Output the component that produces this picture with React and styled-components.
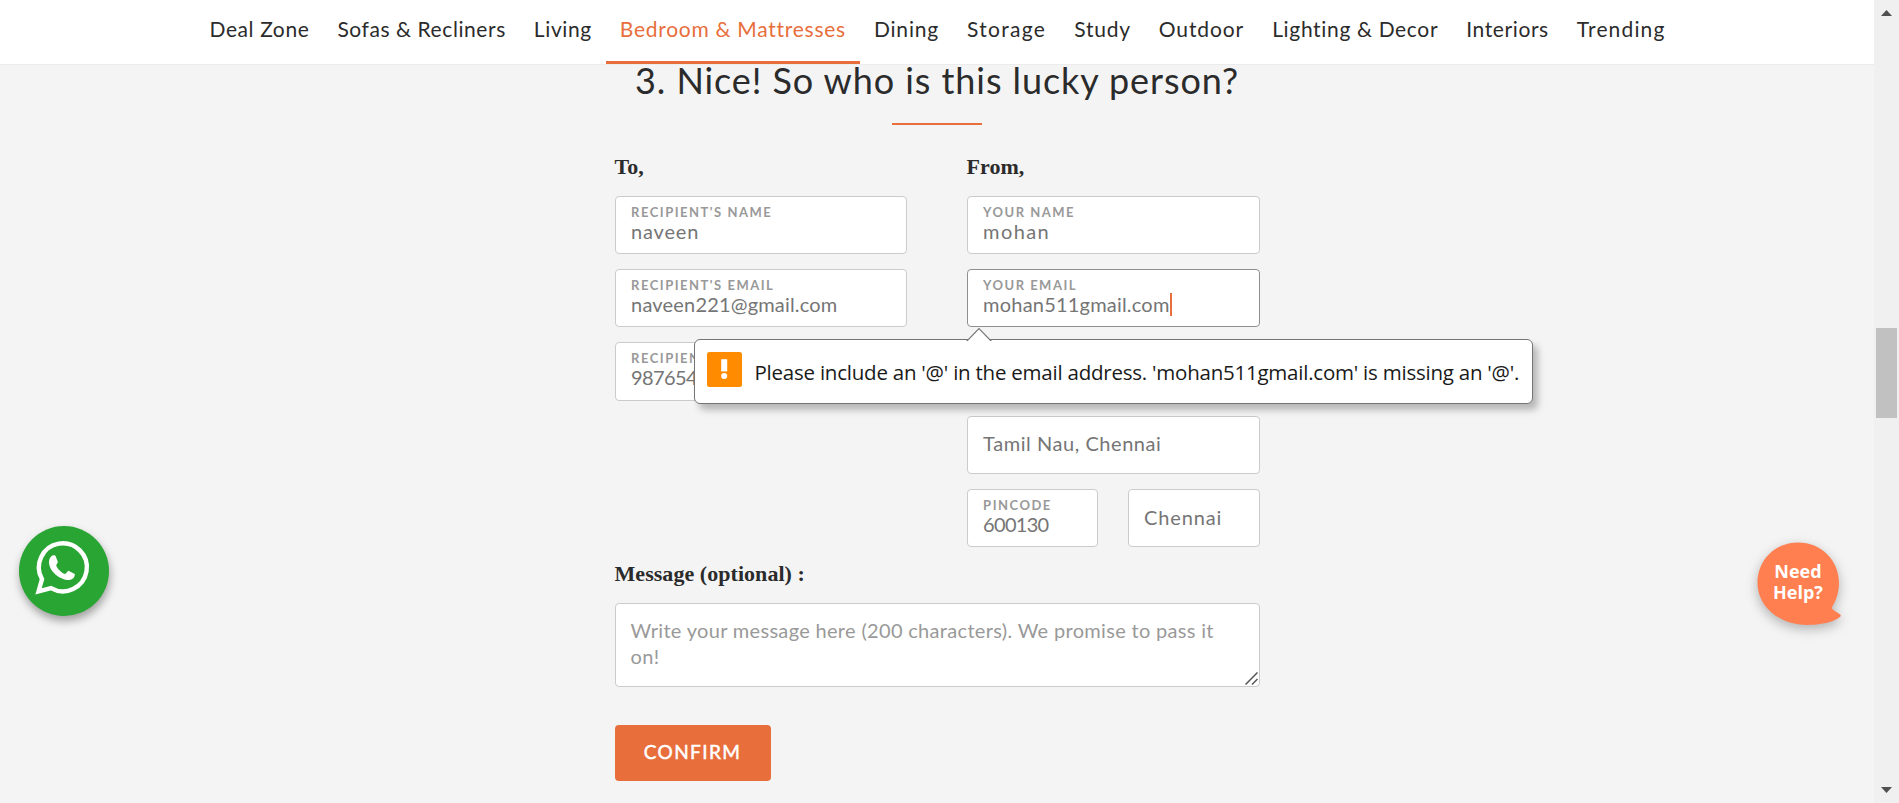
import React from "react";
import styled, { createGlobalStyle, css } from "styled-components";

const accent = "#e86e3c";
const surface = "#f4f4f4";

const GlobalStyle = createGlobalStyle`
  * { box-sizing: border-box; }
  html, body { margin: 0; height: 100%; overflow: hidden; }
  body { background: ${surface}; color: #2b2b2b; font-family: Lato, "Open Sans", sans-serif; }
`;

const Window = styled.div`
  display: grid;
  grid-template-columns: 1fr 25px;
  height: 803px;
  overflow: hidden;
`;

const Page = styled.div`
  min-width: 0;
  background: ${surface};
`;

const Nav = styled.nav`
  display: flex;
  justify-content: center;
  height: 65px;
  padding-left: 1px;
  background: #fff;
  border-bottom: 1px solid #ececec;
`;

const NavItem = styled.a`
  height: 64px;
  padding: 0 14px;
  font-size: 21px;
  line-height: 57px;
  white-space: nowrap;
  letter-spacing: ${(p) => p.$spacing}px;
  color: ${(p) => (p.$active ? accent : "#2b2b2b")};
  border-bottom: 3px solid ${(p) => (p.$active ? accent : "transparent")};
`;

const Form = styled.form`
  display: flex;
  flex-direction: column;
  width: 645px;
  margin: 0 auto;
`;

const Title = styled.h2`
  margin: 0 -20px;
  text-align: center;
  font-size: 36px;
  font-weight: 400;
  line-height: 30px;
  letter-spacing: 0.92px;
  white-space: nowrap;
`;

const Divider = styled.hr`
  width: 90px;
  height: 2px;
  margin: 28px auto 0;
  border: 0;
  background: ${accent};
`;

const Columns = styled.div`
  display: grid;
  grid-template-columns: 292px 293px;
  column-gap: 60px;
  margin-top: 29px;
`;

const Column = styled.div`
  display: flex;
  flex-direction: column;
  gap: 15px;
`;

const GroupLabel = styled.div`
  margin-bottom: 0.8px;
  font: 700 22px/26px "Liberation Serif", serif;
  letter-spacing: 0.05px;
  white-space: nowrap;
`;

const Field = styled.div`
  position: relative;
  height: 58.3px;
  padding: 8px 15px 0 15.6px;
  background: #fff;
  border: 1px solid ${(p) => (p.$focused ? "#8f8f8f" : "#cbcbcb")};
  border-radius: 4px;
`;

const FieldLabel = styled.div`
  overflow: hidden;
  font-size: 13px;
  font-weight: 700;
  line-height: 14px;
  letter-spacing: 1.5px;
  white-space: nowrap;
  color: #999;
`;

const Value = styled.div`
  display: flex;
  align-items: center;
  font-size: 20px;
  line-height: 24px;
  letter-spacing: ${(p) => p.$spacing || 0}px;
  white-space: nowrap;
  color: #757575;
  ${(p) => p.$alone && css`margin-top: 6.8px;`}
`;

const Caret = styled.span`
  width: 2px;
  height: 23px;
  background: ${accent};
`;

const Split = styled.div`
  display: grid;
  grid-template-columns: 131px 132px;
  column-gap: 30px;
`;

const MessageLabel = styled(GroupLabel)`
  margin-top: 13.6px;
`;

const MessageBox = styled.div`
  position: relative;
  height: 84px;
  margin-top: 15.4px;
  padding: 13px 15px;
  background: #fff;
  border: 1px solid #cbcbcb;
  border-radius: 4px;
  color: #999;
  font-size: 20px;
  line-height: 26px;
  letter-spacing: 0.32px;
`;

const ResizeHandle = styled.svg`
  position: absolute;
  right: 1px;
  bottom: 1px;
  width: 13px;
  height: 13px;
`;

const Confirm = styled.button`
  align-self: flex-start;
  width: 156px;
  height: 56px;
  margin-top: 38px;
  padding: 0;
  border: 0;
  border-radius: 4px;
  background: ${accent};
  color: #fff;
  font: 400 19px/54px Lato, sans-serif;
  letter-spacing: 1.4px;
  -webkit-text-stroke: 0.5px #fff;
  span { position: relative; top: -1px; }
`;

const Tooltip = styled.div`
  position: absolute;
  z-index: 5;
  top: 69px;
  left: -274px;
  display: flex;
  align-items: center;
  gap: 13px;
  width: 839px;
  height: 65px;
  padding-left: 12px;
  background: #fff;
  border: 1px solid #757575;
  border-radius: 6px;
  box-shadow: 5px 6px 7px rgba(0, 0, 0, 0.25);
`;

const TooltipArrow = styled.svg`
  position: absolute;
  top: -13px;
  left: 271px;
  width: 26px;
  height: 14px;
`;

const WarnIcon = styled.svg`
  flex: none;
  width: 35px;
  height: 35px;
  margin-top: -5px;
`;

const TooltipText = styled.span`
  font: 400 20.5px/28px "Open Sans", sans-serif;
  letter-spacing: -0.23px;
  white-space: nowrap;
  color: #1a1a1a;
`;

const WhatsAppButton = styled.div`
  position: absolute;
  left: 19px;
  top: 526px;
  width: 90px;
  height: 90px;
  border-radius: 50%;
  background: #28a532;
  box-shadow: 1px 5px 8px rgba(0, 0, 0, 0.35);
  svg { display: block; width: 90px; height: 90px; }
`;

const HelpButton = styled.div`
  position: absolute;
  left: 1757px;
  top: 542px;
  width: 85px;
  height: 84px;
  padding: 19px 3px 0 0;
  text-align: center;
  color: #fff;
  font: 700 18px/21px "Open Sans", sans-serif;
`;

const HelpShape = styled.svg`
  position: absolute;
  inset: 0;
  width: 85px;
  height: 84px;
  overflow: visible;
  filter: drop-shadow(0 4px 6px rgba(0, 0, 0, 0.28));
`;

const HelpText = styled.span`
  position: relative;
  display: block;
`;

const Scrollbar = styled.div`
  display: flex;
  flex-direction: column;
  align-items: center;
  justify-content: space-between;
  padding: 10px 2px;
  background: #f0f0f0;
`;

const ScrollArrow = styled.svg`
  width: 11px;
  height: 6px;
`;

const Track = styled.div`
  width: 21px;
  height: 771px;
  padding-top: 312px;
`;

const Thumb = styled.div`
  height: 90px;
  background: #c1c1c1;
`;

const navItems = [
  ["Deal Zone", 0.6],
  ["Sofas & Recliners", 0.58],
  ["Living", 0.6],
  ["Bedroom & Mattresses", 0.73],
  ["Dining", 0.83],
  ["Storage", 1.3],
  ["Study", 0.75],
  ["Outdoor", 0.9],
  ["Lighting & Decor", 0.66],
  ["Interiors", 0.6],
  ["Trending", 1.15],
];

function TextField({ label, value, spacing, focused, children }) {
  return (
    <Field $focused={focused}>
      {label && <FieldLabel>{label}</FieldLabel>}
      <Value $spacing={spacing} $alone={!label}>
        {value}
        {focused && <Caret />}
      </Value>
      {children}
    </Field>
  );
}

function ValidationTooltip() {
  return (
    <Tooltip>
      <TooltipArrow viewBox="0 0 26 14">
        <path d="M1 13.5 L13 1.5 L25 13.5 V14 H1 Z" fill="#fff" />
        <path d="M0.5 13.5 H1.5 L13 1.5 L24.5 13.5 H25.5" fill="none" stroke="#757575" strokeWidth="1.1" />
      </TooltipArrow>
      <WarnIcon viewBox="0 0 35 35">
        <rect width="35" height="35" rx="2.5" fill="#ff8c00" />
        <rect x="14.2" y="7.2" width="6" height="12.2" fill="#fff" />
        <circle cx="17.2" cy="24" r="3" fill="#fff" />
      </WarnIcon>
      <TooltipText>
        Please include an '@' in the email address. 'mohan511gmail.com' is missing an '@'.
      </TooltipText>
    </Tooltip>
  );
}

export default function App() {
  return (
    <>
      <GlobalStyle />
      <Window>
        <Page>
          <Nav>
            {navItems.map(([name, spacing]) => (
              <NavItem key={name} $spacing={spacing} $active={name.startsWith("Bedroom")}>
                {name}
              </NavItem>
            ))}
          </Nav>
          <Form>
            <Title>3. Nice! So who is this lucky person?</Title>
            <Divider />
            <Columns>
              <Column>
                <GroupLabel>To,</GroupLabel>
                <TextField label="RECIPIENT'S NAME" value="naveen" spacing={0.8} />
                <TextField label="RECIPIENT'S EMAIL" value="naveen221@gmail.com" spacing={0.18} />
                <TextField label="RECIPIENT'S" value="987654" spacing={-0.6} />
              </Column>
              <Column>
                <GroupLabel>From,</GroupLabel>
                <TextField label="YOUR NAME" value="mohan" spacing={1.4} />
                <TextField label="YOUR EMAIL" value="mohan511gmail.com" spacing={0.2} focused>
                  <ValidationTooltip />
                </TextField>
                <TextField />
                <TextField value="Tamil Nau, Chennai" spacing={0.55} />
                <Split>
                  <TextField label="PINCODE" value="600130" spacing={-0.7} />
                  <TextField value="Chennai" spacing={0.85} />
                </Split>
              </Column>
            </Columns>
            <MessageLabel>Message (optional) :</MessageLabel>
            <MessageBox>
              Write your message here (200 characters). We promise to pass it on!
              <ResizeHandle viewBox="0 0 13 13">
                <path d="M0.5 12.5 L12.5 0.5 M7 12.5 L12.5 7" stroke="#555" strokeWidth="1.5" />
              </ResizeHandle>
            </MessageBox>
            <Confirm type="button"><span>CONFIRM</span></Confirm>
          </Form>
        </Page>
        <Scrollbar>
          <ScrollArrow viewBox="0 0 11 6"><path d="M0 6 L5.5 0 L11 6 Z" fill="#505050" /></ScrollArrow>
          <Track><Thumb /></Track>
          <ScrollArrow viewBox="0 0 11 6"><path d="M0 0 L5.5 6 L11 0 Z" fill="#505050" /></ScrollArrow>
        </Scrollbar>
      </Window>
      <WhatsAppButton>
        <svg viewBox="0 0 90 90">
          <path
            d="M19.5 65.5 L23 53.2 A24 24 0 1 1 32 62.2 Z"
            fill="none" stroke="#fff" strokeWidth="4.4"
          />
          <path
            d="M33.5 29.5 C31.5 30.5 30 33 30 36 C30 46 42 54.5 50.5 54 C53.5 53.5 56 51.5 55.8 48 L49.5 44.8 C48.5 44.8 47.5 47.5 46 48 C42.5 47 38.5 43 37.2 39.6 C37.4 38.3 38.8 37.3 38.8 35.8 L36.6 30 C36.2 29.2 34.5 29 33.5 29.5 Z"
            fill="#fff"
          />
        </svg>
      </WhatsAppButton>
      <HelpButton>
        <HelpShape viewBox="0 0 85 84">
          <path
            d="M41 0.5 C64 0.5 82 18 82 41 C82 50 79 59 74.5 66 C77 69.5 83.5 71.5 83.8 73.5 C84 76 72 83 50 83 C22 83 0.5 64 0.5 41 C0.5 18 18 0.5 41 0.5 Z"
            fill="#ff7f50"
          />
        </HelpShape>
        <HelpText>Need</HelpText>
        <HelpText>Help?</HelpText>
      </HelpButton>
    </>
  );
}
